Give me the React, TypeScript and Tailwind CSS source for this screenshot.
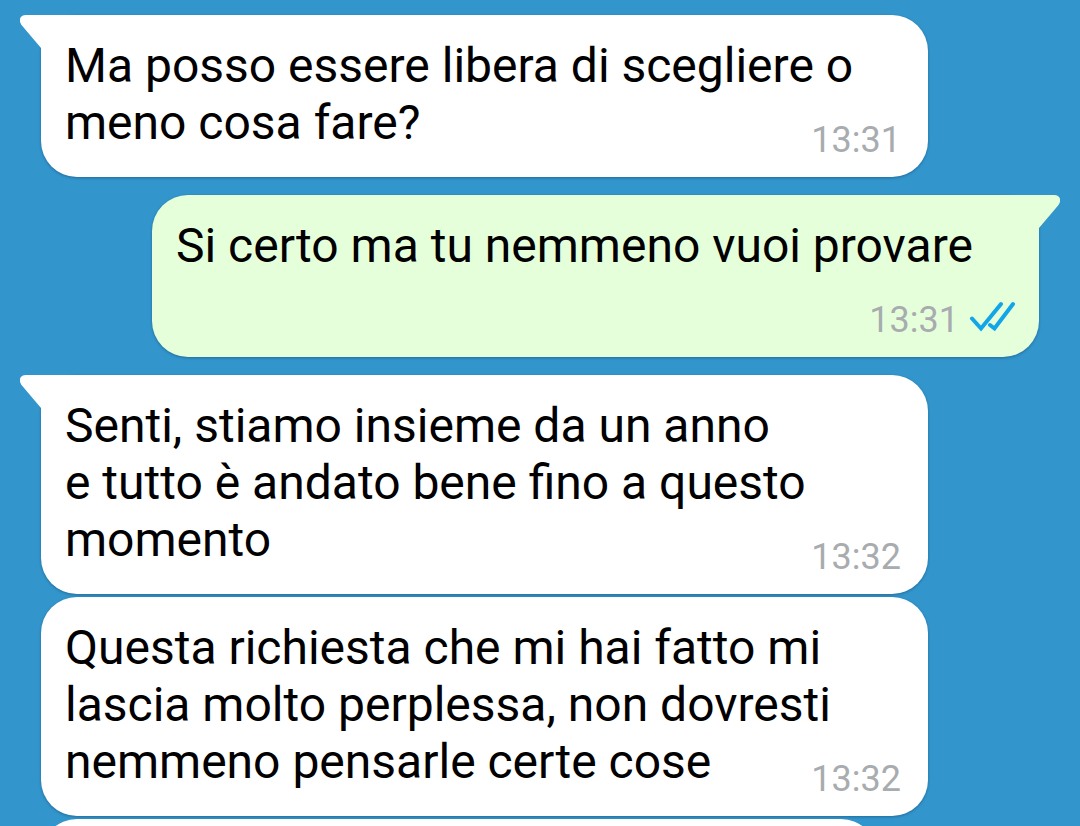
import React from "react";

type Message = { lines: string[]; time: string; own?: boolean; tail?: boolean };

const messages: Message[] = [
  { lines: ["Ma posso essere libera di scegliere o", "meno cosa fare?"], time: "13:31", tail: true },
  { lines: ["Si certo ma tu nemmeno vuoi provare"], time: "13:31", own: true, tail: true },
  { lines: ["Senti, stiamo insieme da un anno", "e tutto è andato bene fino a questo", "momento"], time: "13:32", tail: true },
  { lines: ["Questa richiesta che mi hai fatto mi", "lascia molto perplessa, non dovresti", "nemmeno pensarle certe cose"], time: "13:32" },
];

function Tail({ own }: { own?: boolean }) {
  return (
    <svg
      aria-hidden="true"
      viewBox="0 0 60 40"
      className={own ? "absolute top-0 -right-[21px] h-10 w-[60px] -scale-x-100 text-[#e5ffdb]" : "absolute top-0 -left-[21px] h-10 w-[60px] text-white"}
    >
      <path d="M60 0H6C0 0-2 5 1.500 10L21 33V40H60Z" fill="currentColor" />
    </svg>
  );
}

function Checks() {
  return (
    <svg
      role="img"
      aria-label="Letto"
      viewBox="0 0 46 32"
      className="h-8 w-[46px]"
      fill="none"
      stroke="#12a6e8"
      strokeWidth="4"
      strokeLinecap="round"
    >
      <path d="M3 18.500L12 28.500L32 4M21 25L25.500 28.500L44 4" />
    </svg>
  );
}

function Bubble({ lines, time, own, tail }: Message) {
  return (
    <article
      className={
        "relative w-[887px] max-w-full rounded-[36px] px-6 pt-[22px] shadow-[0_1px_3px_rgba(0,30,60,0.35)] " +
        (own ? "self-end bg-[#e5ffdb] pb-[83px]" : "self-start bg-white pb-[26px]")
      }
    >
      {tail && <Tail own={own} />}
      <p className="relative text-[48px] leading-[57px] text-black">
        {lines.map((line) => (
          <span key={line} className="block whitespace-nowrap">{line}</span>
        ))}
      </p>
      <div
        className={
          "absolute bottom-[17px] flex items-start gap-[10px] text-[36px] leading-10 text-[#a8acaf] " +
          (own ? "right-6" : "right-[27px]")
        }
      >
        <time>{time}</time>
        {own && <Checks />}
      </div>
    </article>
  );
}

export default function App() {
  return (
    <main className="flex h-screen flex-col overflow-hidden bg-[#3296cd] px-[41px] pt-[15px] font-['Roboto',sans-serif]">
      <div className="flex shrink-0 flex-col">
        {messages.map((m, i) => (
          <div key={i} className={"flex flex-col " + (i === 0 ? "" : m.tail ? "mt-[18px]" : "mt-[3px]")}>
            <Bubble {...m} />
          </div>
        ))}
        <div className="mt-[3px] h-20 w-[836px] max-w-full rounded-[36px] bg-white" />
      </div>
    </main>
  );
}
